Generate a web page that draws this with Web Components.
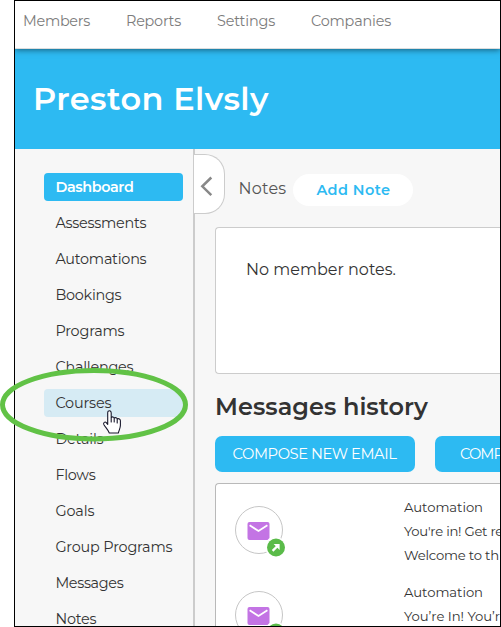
<!DOCTYPE html>
<html lang="en"><head><meta charset="utf-8"><title>Preston Elvsly</title>
<style>
html,body{margin:0;width:501px;height:627px;overflow:hidden;background:#fff}
body{font-family:Montserrat,Inter,"Open Sans",sans-serif;position:relative}
</style></head><body>
<member-page></member-page>
<script>
const define=(name,html,setup)=>customElements.define(name,class extends HTMLElement{
  connectedCallback(){
    if(this.shadowRoot)return;
    this.attachShadow({mode:'open'}).innerHTML=html;
    if(setup)setup(this,this.shadowRoot);
  }
});

/* One line of text whose tracking is adjusted to a given advance width. */
define('ui-text',`<style>:host{display:block;white-space:nowrap;flex:none}span{display:inline-block}</style><span><slot></slot></span>`,(el,r)=>{
  const s=r.querySelector('span'),n=[...el.textContent].length,w=+el.getAttribute('w');
  if(!w)return;
  el.style.width=w+'px';
  s.style.letterSpacing=(w-s.getBoundingClientRect().width)/n+'px';
});

define('top-nav',`<style>
:host{display:block;height:47px;background:#fff;border-bottom:1px solid #ddd;box-shadow:0 1px 6px rgba(0,0,0,.5);position:relative;z-index:1;flex:none}
nav{display:flex;gap:36px;padding-left:8px;height:40px;align-items:center;font-size:14.4px;font-weight:400;color:#7c7c7c}
</style><nav><ui-text w="67">Members</ui-text><ui-text w="55">Reports</ui-text><ui-text w="58">Settings</ui-text><ui-text w="80">Companies</ui-text></nav>`);

define('page-title',`<style>
:host{display:flex;height:100px;box-sizing:border-box;padding:0 0 1px 18px;align-items:center;background:#2dbaf2;color:#fff;font-size:32px;font-weight:600;flex:none}
</style><ui-text w="236">Preston Elvsly</ui-text>`);

define('nav-item',`<style>
:host{display:flex;align-items:center;height:28px;flex:none;box-sizing:border-box;padding:0 0 0 11.4px;border-radius:4px;font-size:14.4px;font-weight:400;color:#333}
:host([active]){background:#2dbaf2;color:#fff;font-weight:600}
:host([hover]){background:#d6ebf4}
</style><slot></slot>`);

define('side-bar',`<style>
:host{display:flex;flex-direction:column;gap:8px;padding:24px 10px 0 29px;border-right:2px solid #ccc;box-sizing:content-box;width:139px;flex:none}
</style>
<nav-item active><ui-text w="78">Dashboard</ui-text></nav-item>
<nav-item><ui-text w="91">Assessments</ui-text></nav-item>
<nav-item><ui-text w="91">Automations</ui-text></nav-item>
<nav-item><ui-text w="66">Bookings</ui-text></nav-item>
<nav-item><ui-text w="69">Programs</ui-text></nav-item>
<nav-item><ui-text w="78">Challenges</ui-text></nav-item>
<nav-item hover><ui-text w="56">Courses</ui-text></nav-item>
<nav-item><ui-text w="48">Details</ui-text></nav-item>
<nav-item><ui-text w="40">Flows</ui-text></nav-item>
<nav-item><ui-text w="39">Goals</ui-text></nav-item>
<nav-item><ui-text w="117">Group Programs</ui-text></nav-item>
<nav-item><ui-text w="68">Messages</ui-text></nav-item>
<nav-item><ui-text w="41">Notes</ui-text></nav-item>`);

define('collapse-toggle',`<style>
:host{display:block;box-sizing:border-box;width:31px;height:60px;margin:5px 0 0 -1px;background:#fff;border:1px solid #ccc;border-left:0;border-radius:0 20px 20px 0;flex:none}
svg{display:block}
</style><svg width="30" height="58"><path d="M17.3 22.5 8.3 31.3l9 8.8" fill="none" stroke="#888" stroke-width="2.5"/></svg>`);

define('notes-bar',`<style>
:host{display:flex;height:78px;align-items:flex-start}
.label{margin:30px 7px 0 13.4px;font-size:16px;line-height:20px;color:#555}
.pill{display:flex;align-items:center;justify-content:center;width:120px;height:32px;margin-top:25px;border-radius:16px;background:#fff;color:#2dbaf2;font-size:14.5px;font-weight:600;flex:none}
</style><collapse-toggle></collapse-toggle><ui-text class="label" w="48">Notes</ui-text><div class="pill"><ui-text w="74">Add Note</ui-text></div>`);

define('ui-panel',`<style>
:host{display:block;box-sizing:border-box;margin-left:20px;background:#fff;border:1px solid #ccc;border-right:0;border-radius:4px 0 0 4px}
</style><slot></slot>`);

define('action-button',`<style>
:host{display:flex;align-items:center;box-sizing:border-box;width:200px;height:36px;padding:0 0 1px 17.5px;border-radius:7px;background:#2dbaf2;color:#fff;font-size:14.7px;font-weight:400;flex:none}
:host([wide]){padding-left:25px}
</style><slot></slot>`);

define('mail-icon',`<style>:host{display:block;width:52px;height:52px;flex:none}svg{display:block}</style>
<svg width="52" height="52" viewBox="0 0 52 52"><circle cx="24" cy="24" r="23.5" fill="#fff" stroke="#c6c6c6"/>
<path d="M14.5 16h18a2 2 0 0 1 2 2v14l-2 2h-18a2 2 0 0 1-2-2V18a2 2 0 0 1 2-2z" fill="#c374e4"/>
<path d="m14.6 19.3 8.9 5.7 8.9-5.7" fill="none" stroke="#fff" stroke-width="1.8"/>
<circle cx="41" cy="41.5" r="10.5" fill="#fff"/><circle cx="41" cy="41.5" r="9" fill="#5abb49"/>
<path d="m37.6 44.9 4.8-4.8" stroke="#fff" stroke-width="2.2" fill="none"/><path d="M38.6 38h6v6z" fill="#fff"/></svg>`);

define('message-row',`<style>
:host{display:flex;gap:117px;height:85px;padding-left:19px}
mail-icon{margin-top:-2px}
.lines{margin-top:-13px;font-size:13.2px;line-height:24px;color:#333}
</style><mail-icon></mail-icon><div class="lines"><slot></slot></div>`);

define('member-main',`<style>
:host{display:block;flex:1;min-width:0}
.none{padding:32px 0 0 30px;font-size:16px;line-height:20px;color:#333}
.notes{height:147px}
h2{margin:17px 0 0 20px;height:45px;line-height:32px;font-size:24px;font-weight:600;color:#333}
.buttons{display:flex;gap:20px;margin:0 0 11px 20px}
.list{height:160px;padding-top:24px;border-color:#b9b9b9}
</style><notes-bar></notes-bar>
<ui-panel class="notes"><ui-text class="none" w="150">No member notes.</ui-text></ui-panel>
<h2><ui-text w="213">Messages history</ui-text></h2>
<div class="buttons"><action-button><ui-text w="164">COMPOSE NEW EMAIL</ui-text></action-button><action-button wide><ui-text w="43">COMP</ui-text></action-button></div>
<ui-panel class="list">
<message-row><ui-text w="79">Automation</ui-text><ui-text w="99">You're in! Get re</ui-text><ui-text w="95">Welcome to th</ui-text></message-row>
<message-row><ui-text w="79">Automation</ui-text><ui-text w="96">You’re In! You’r</ui-text></message-row>
</ui-panel>`);

define('callout-overlay',`<style>:host{position:absolute;left:0;top:360px;z-index:3;pointer-events:none}svg{display:block}</style>
<svg width="200" height="90" viewBox="0 360 200 90"><ellipse cx="94" cy="404.7" rx="91.5" ry="34.2" fill="none" stroke="#61c246" stroke-width="5"/>
<path d="M108.2 411.2c1.5-1 3 0 3 1.8v4.5c1-1 2.6-.7 3 .5 1.3-.8 2.7-.3 3 .9 1.6-.7 3.2.2 3.2 1.9v4.5c0 3-1.2 4.3-2.1 7.7h-9c-1.2-3.4-3.8-5.5-5.5-8.6-.8-1.8 1.2-3.1 2.5-1.8l1.4 1.8V413c0-.8.1-1.4.5-1.8zM111.2 417v5m3-4v4m3-3v4" fill="#fff" stroke="#17172b" stroke-width="1.1" stroke-linecap="round" stroke-linejoin="round"/></svg>`);

define('member-page',`<style>
:host{display:block;width:501px;height:627px;box-sizing:border-box;padding-left:14px}
.frame{display:flex;flex-direction:column;box-sizing:border-box;width:487px;height:627px;border:1px solid #000;overflow:hidden;background:#f7f7f7}
.body{display:flex;flex:1;min-height:0}
</style><div class="frame"><top-nav></top-nav><page-title></page-title><div class="body"><side-bar></side-bar><member-main></member-main></div></div><callout-overlay></callout-overlay>`);
</script></body></html>
